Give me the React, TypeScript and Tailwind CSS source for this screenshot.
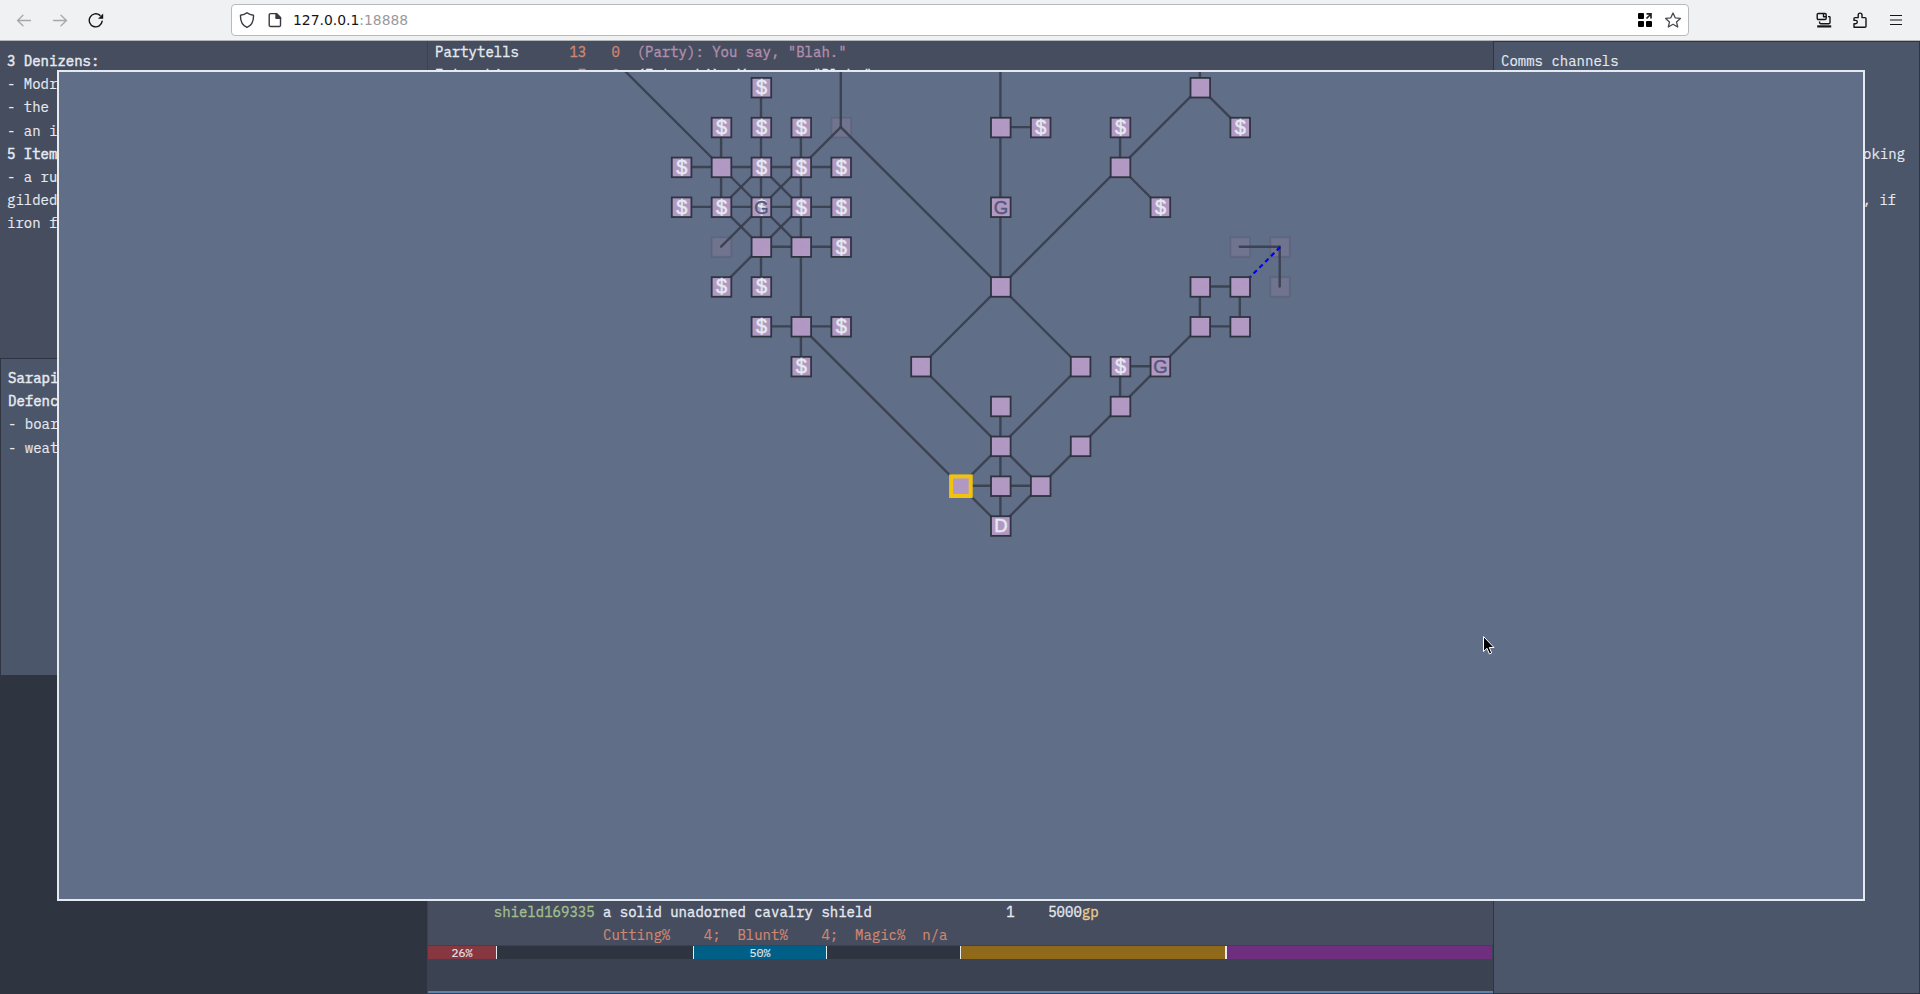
import React from "react";

const P = 39.9;
const X = (c: number) => 681.6 + P * c - 60;
const Y = (r: number) => 87.7 + 39.85 * r - 72;

// [column, row, label, kind]
const rooms: [number, number, string?, string?][] = [
  [2, 0, "$"], [1, 1, "$"], [2, 1, "$"], [3, 1, "$"], [4, 1, "", "ghost"],
  [0, 2, "$"], [1, 2], [2, 2, "$"], [3, 2, "$"], [4, 2, "$"],
  [0, 3, "$"], [1, 3, "$"], [2, 3, "$G"], [3, 3, "$"], [4, 3, "$"],
  [1, 4, "", "ghost"], [2, 4], [3, 4], [4, 4, "$"],
  [1, 5, "$"], [2, 5, "$"],
  [2, 6, "$"], [3, 6], [4, 6, "$"], [3, 7, "$"],
  [8, 1], [9, 1, "$"], [8, 3, "G"], [8, 5],
  [13, 0], [14, 1, "$"], [11, 1, "$"], [11, 2], [12, 3, "$"],
  [14, 4, "", "ghost"], [15, 4, "", "ghost"], [15, 5, "", "ghost"],
  [13, 5], [14, 5], [13, 6], [14, 6],
  [6, 7], [10, 7], [11, 7, "$"], [12, 7, "G"],
  [8, 8], [11, 8], [8, 9], [10, 9],
  [7, 10, "", "here"], [8, 10], [9, 10], [8, 11, "D"],
];

const links: [number, number, number, number][] = [
  [-3, -2, 1, 2], [2, 0, 2, 5], [1, 1, 1, 3], [3, 1, 3, 7], [4, -2, 4, 1],
  [4, 1, 2, 3], [2, 3, 1, 4], [4, 1, 8, 5], [0, 2, 4, 2], [0, 3, 4, 3],
  [2, 4, 4, 4], [1, 2, 3, 4], [2, 2, 1, 3], [2, 2, 3, 3], [1, 3, 2, 4],
  [3, 3, 1, 5], [2, 6, 4, 6], [3, 6, 7, 10],
  [8, -2, 8, 5], [8, 1, 9, 1], [13, -1, 13, 0], [13, 0, 14, 1], [13, 0, 8, 5],
  [11, 1, 11, 2], [11, 2, 12, 3], [8, 5, 6, 7], [8, 5, 10, 7], [6, 7, 8, 9],
  [10, 7, 8, 9], [8, 8, 8, 11], [8, 9, 7, 10], [8, 9, 9, 10], [7, 10, 9, 10],
  [7, 10, 8, 11], [8, 11, 13, 6], [11, 7, 12, 7], [11, 7, 11, 8],
  [13, 5, 14, 5], [13, 6, 14, 6], [13, 5, 13, 6], [14, 5, 14, 6],
  [14, 4, 15, 4], [15, 4, 15, 5],
];

function RoomMap() {
  return (
    <svg className="block h-full w-full" viewBox="0 0 1804 828">
      {rooms.filter((r) => r[3] === "ghost").map(([c, r], i) => (
        <rect key={i} x={X(c) - 9.7} y={Y(r) - 9.7} width="19.4" height="19.4" fill="#b48ead" fillOpacity="0.2" stroke="#2e3440" strokeOpacity="0.16" strokeWidth="1.8" />
      ))}
      {links.map(([a, b, c, d], i) => (
        <line key={i} x1={X(a) - 0.4} y1={Y(b) - 0.4} x2={X(c) - 0.4} y2={Y(d) - 0.4} stroke="#373d4c" strokeOpacity="0.9" strokeWidth="2.400" strokeLinecap="round" />
      ))}
      <line x1={X(15)} y1={Y(4)} x2={X(14)} y2={Y(5)} stroke="#0000ff" strokeWidth="2.300" strokeDasharray="4.600 3.600" />
      {rooms.filter((r) => r[3] !== "ghost").map(([c, r, label, kind], i) => (
        <g key={i}>
          <rect x={X(c) - 9.8} y={Y(r) - 9.8} width="19.6" height="19.6" fill="#b59bc6" fillOpacity="0.97" stroke={kind === "here" ? "#f1c30f" : "#2e3440"} strokeWidth={kind === "here" ? 4 : 1.8} />
          {(label || "").split("").map((ch) => (
            <text key={ch} x={X(c) + 0.1} y={Y(r) + 6.4} textAnchor="middle" fontSize={ch === "$" ? 20 : 18.5} fontFamily='"Liberation Sans", sans-serif' fill={ch === "G" ? "#55597a" : "#e5e9f0"} stroke={ch === "G" ? "#55597a" : "#e5e9f0"} strokeWidth="0.5">{ch}</text>
          ))}
        </g>
      ))}
    </svg>
  );
}

function BrowserBar() {
  return (
    <header className="flex h-[41px] shrink-0 items-center border-b border-[#b5b6ba] bg-[#f0f1f3] text-[#15141a]">
      <div className="flex w-[231px] items-center gap-5 pl-4">
        <svg className="text-[#a8a8ab]" width="16" height="16" viewBox="0 0 16 16" fill="none" stroke="currentColor" strokeWidth="1.3" strokeLinecap="round" strokeLinejoin="round"><path d="M14.5 8.500H1.500M7 3.200 1.500 8.500 7 13.800" /></svg>
        <svg className="text-[#a8a8ab]" width="16" height="16" viewBox="0 0 16 16" fill="none" stroke="currentColor" strokeWidth="1.3" strokeLinecap="round" strokeLinejoin="round"><path d="M1.500 8.500h13M9 3.200 14.500 8.500 9 13.800" /></svg>
        <svg width="16" height="16" viewBox="0 0 16 16" fill="none" stroke="currentColor" strokeWidth="1.400" strokeLinecap="round"><path d="M14.200 9.200a6.500 6.500 0 1 1-2.200-5.800" /><path d="M15.200 1.600v5.200H10z" fill="currentColor" stroke="none" /></svg>
      </div>
      <div className="flex h-8 w-[1458px] items-center rounded border border-[#b9babd] bg-white pl-[7px] pr-[7px]">
        <svg width="16" height="16" viewBox="0 0 16 16" fill="none" stroke="#3b3a40" strokeWidth="1.400" strokeLinejoin="round"><path d="M8 .8c1.700 1.500 4 2.300 6.500 2.500.2 5.300-1.100 9.700-6.500 12.100C2.600 13 1.300 8.600 1.500 3.300 4 3.100 6.300 2.300 8 .8z" /></svg>
        <svg className="ml-3" width="16" height="16" viewBox="0 0 16 16" fill="none" stroke="#3b3a40" strokeWidth="1.400" strokeLinejoin="round"><path d="M3.500 1.600h6l4 4v7.600a1.300 1.300 0 0 1-1.300 1.300H3.500a1.300 1.300 0 0 1-1.300-1.300V2.900a1.300 1.300 0 0 1 1.300-1.300z" /><path d="M9 1.500v4.700h4.700z" fill="#3b3a40" /></svg>
        <span className="ml-2.5 whitespace-nowrap pt-px font-['DejaVu_Sans',sans-serif] text-[13.900px] text-[#15141a]">127.0.0.1<span className="text-[#99999c]">:18888</span></span>
        <svg className="ml-auto" width="16" height="16" viewBox="0 0 16 16"><g fill="#000"><rect x="1" y="1" width="6" height="6" rx="1" /><rect x="1" y="9" width="6" height="6" rx="1" /><rect x="9" y="9" width="6" height="6" rx="1" /></g><path d="M9.500 6.500 14 2M9.500 1.800H14v4.700" fill="none" stroke="#222" strokeWidth="1.700" /></svg>
        <svg className="ml-3" width="16" height="16" viewBox="0 0 16 16" fill="none" stroke="#4a4950" strokeWidth="1.300" strokeLinejoin="round"><path d="m8 1 2.200 4.800 5.200.6-3.900 3.500 1.200 5.100L8 12.300 3.300 15l1.200-5.100L.6 6.400l5.200-.6z" /></svg>
      </div>
      <div className="ml-auto flex items-center gap-5 pr-4">
        <svg width="16" height="16" viewBox="0 0 16 16" fill="none" stroke="#15141a" strokeWidth="1.400" strokeLinejoin="round"><rect x="1.200" y="1.500" width="9" height="6" rx="1.200" /><path d="M7.500 1.500v3.200h2.500M12 4.600h1.300a.7.7 0 0 1 .7.700V10.500a1.200 1.200 0 0 1-1.200 1.200H4.800a1.200 1.200 0 0 1-1.200-1.200V9.500" /><path d="M1.200 14.400h14" strokeWidth="2.200" /></svg>
        <svg width="16" height="16" viewBox="0 0 16 16" fill="none" stroke="#15141a" strokeWidth="1.400" strokeLinejoin="round"><path d="M2 15.200h11a1 1 0 0 0 1-1V6.600a1 1 0 0 0-1-1h-3V3A1.900 1.900 0 0 0 6.200 3v2.600H3a1 1 0 0 0-1 1V8.400h1.600a1.700 1.700 0 0 1 0 3.400H2z" /></svg>
        <svg width="16" height="16" viewBox="0 0 16 16" fill="none" stroke="#15141a" strokeWidth="1.200"><path d="M2 3.500h12M2 8h12M2 12.500h12" /></svg>
      </div>
    </header>
  );
}

type GaugeProps = { width: number; fill: number; color: string; label?: string; start?: boolean; end?: boolean };

function Gauge({ width, fill, color, label, start = true, end = true }: GaugeProps) {
  return (
    <div className={start ? "flex h-[13px] border-l border-[#e5e9f0] bg-[#2e3440]" : "flex h-[13px] bg-[#2e3440]"} style={{ width }}>
      <div className={end ? "flex items-center justify-center border-r border-[#e5e9f0] text-[11.700px] leading-none" : "flex"} style={{ width: fill, backgroundColor: color }}>
        {label}
      </div>
    </div>
  );
}

export default function App() {
  return (
    <div className="relative flex h-[994px] w-[1920px] flex-col overflow-hidden bg-[#2e3440] font-['IBM_Plex_Mono','Liberation_Mono',monospace] text-[14px] leading-[23.200px] text-[#e5e9f0]">
      <BrowserBar />
      <main className="flex min-h-0 flex-1 whitespace-pre [-webkit-text-stroke:0.15px]">
        <aside className="flex w-[427px] shrink-0 flex-col">
          <section className="h-[317px] bg-[#454d5f] pl-[7px] pt-[9px]">
            <div className="[-webkit-text-stroke:0.5px]">3 Denizens:</div>
            <div>- Modr</div>
            <div>- the </div>
            <div>- an i</div>
            <div className="[-webkit-text-stroke:0.5px]">5 Item</div>
            <div>- a ru</div>
            <div>gilded</div>
            <div>iron f</div>
          </section>
          <section className="h-[317px] border border-b-0 border-[#2e3440] bg-[#4c566a] pl-[7px] pt-2">
            <div className="[-webkit-text-stroke:0.5px]">Sarapi</div>
            <div className="[-webkit-text-stroke:0.5px]">Defenc</div>
            <div>- boar</div>
            <div>- weat</div>
          </section>
        </aside>
        <section className="flex w-[1066px] shrink-0 flex-col border-l border-[#3b4252] bg-[#3b4252]">
          <div className="flex h-[904px] shrink-0 flex-col justify-between bg-[#454d5f] pl-[7px]">
            <div className="[-webkit-text-stroke:0.35px]">
              <div>Partytells      <span className="text-[#d08770]">13   0</span>  <span className="text-[#b48ead]">(Party): You say, "Blah."</span></div>
              <div>Entourhi         <span className="text-[#d08770]">7   0</span>  (Entourhi): You say, "Blah."</div>
            </div>
            <div className="relative top-0.5 [-webkit-text-stroke:0.35px]">
              <div>       <span className="text-[#a3be8c]">shield169335</span> a solid unadorned cavalry shield                1    5000<span className="text-[#ebcb8b]">gp</span></div>
              <div className="text-[#d08770] [-webkit-text-stroke:0.200px]">                    Cutting%    4;  Blunt%    4;  Magic%  n/a</div>
            </div>
          </div>
          <div className="mt-px flex h-[13px] shrink-0">
            <Gauge width={265} fill={69} color="#86373f" label="26%" start={false} />
            <Gauge width={267} fill={133} color="#005f87" label="50%" />
            <Gauge width={266} fill={265} color="#90691a" />
            <Gauge width={266} fill={265} color="#702f7e" end={false} />
          </div>
          <div className="mt-8 h-0.5 shrink-0 bg-[#5e81ac]" />
        </section>
        <aside className="flex-1 border border-[#2e3440] bg-[#4c566a] pl-[7px] pt-2">
          <div>Comms channels</div>
          <div className="pr-[14px] pt-[70px] text-right">looking</div>
          <div className="pr-[23px] pt-[23px] text-right">, if</div>
        </aside>
      </main>
      <div className="absolute left-[57px] top-[70px] h-[831px] w-[1808px] overflow-hidden border-2 border-[#e5e9f0] bg-[#616e88]">
        <div className="ml-px h-[828px] w-[1804px]"><RoomMap /></div>
      </div>
      <svg className="absolute left-[1482px] top-[635px]" width="14" height="22" viewBox="0 0 14 22"><path d="M1.500 1.500v15l3.500-3.200 2.400 5.700 2.300-1-2.400-5.500h4.700z" fill="#000" stroke="#fff" /></svg>
    </div>
  );
}
